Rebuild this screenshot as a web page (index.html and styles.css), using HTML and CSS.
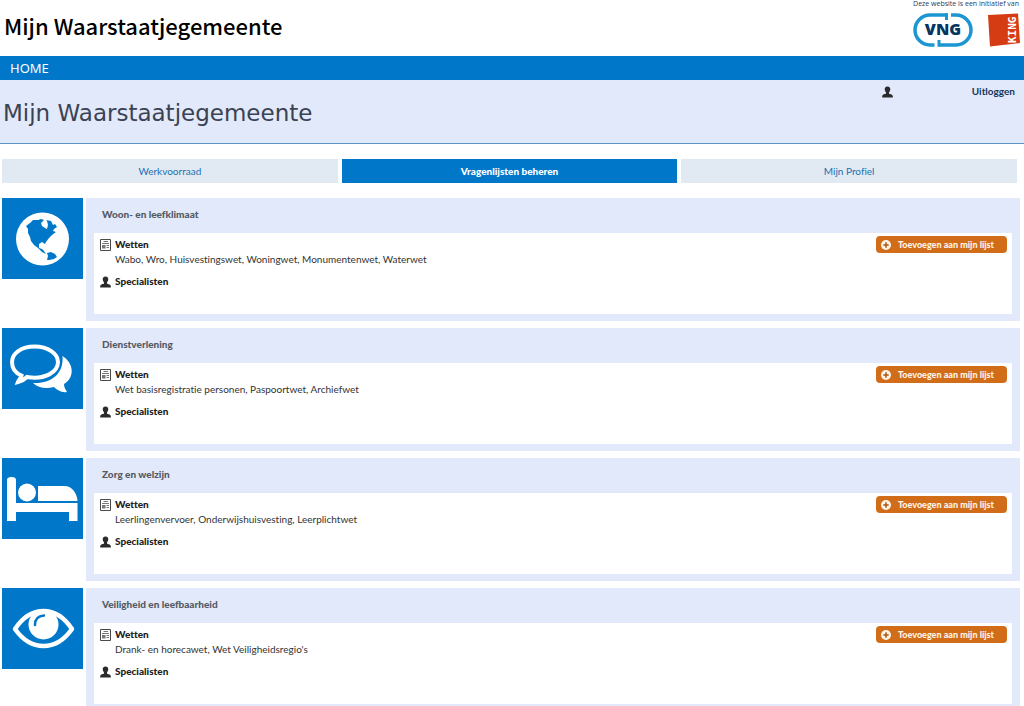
FILE: index.html
```html
<!DOCTYPE html>
<html lang="nl">
<head>
<meta charset="utf-8">
<title>Mijn Waarstaatjegemeente</title>
<meta name="viewport" content="width=device-width, initial-scale=1">
<link rel="stylesheet" href="styles.css">
</head>
<body>
<svg class="sprite" aria-hidden="true">
  <symbol id="person" viewBox="0 0 12 12"><path d="M6 0C3.700 0 2.800 1.500 3 3.300C3.100 4.800 3.900 5.800 4.300 6.400V7.600C4 8.500 .4 8.200 .2 10.500V12H11.800V10.500C11.600 8.200 8 8.500 7.700 7.600V6.400C8.100 5.800 8.900 4.800 9 3.300C9.200 1.500 8.300 0 6 0Z" fill="#2b2b2e"/></symbol>
  <symbol id="law" viewBox="0 0 11 12"><path d="M.5 .5H10.500V11.500H.5Z" fill="#fff" stroke="#4a4a4a"/><path d="M3.500 2.500H8M2 4.500H9M6.500 6.500H9M6.500 8.500H9" stroke="#777"/><path d="M2 6H5.500V9.500H2Z" fill="#777"/></symbol>
  <symbol id="plus" viewBox="0 0 10 10"><circle cx="5" cy="5" r="5" fill="#fff3e6"/><path d="M5 2.300V7.700M2.300 5H7.700" stroke="#a8581a" stroke-width="1.500"/></symbol>
</svg>

<header class="masthead">
  <div class="brand">Mijn Waarstaatjegemeente</div>
  <div class="initiative">
    <p class="initiative-text">Deze website is een initiatief van</p>
    <div class="logos">
      <svg class="vng" viewBox="0 0 60 34" role="img" aria-label="VNG">
        <path d="M35 2H17a15 15 0 0 0 0 30H21.500M26 32H43a15 15 0 0 0 0-30H38" fill="none" stroke="#1c96d2" stroke-width="3.500"/>
        <path d="M33.500 .3V7M26 27V33.700" stroke="#1c96d2" stroke-width="3"/>
        <text class="vng-text" x="30" y="22" text-anchor="middle">VNG</text>
      </svg>
      <svg class="king" viewBox="0 0 34 34" role="img" aria-label="KING">
        <path d="M1 2L31 .5L33 30L3 33.500Z" fill="#d63c14"/>
        <text class="king-text" transform="translate(29 30) rotate(-90)">KING</text>
      </svg>
    </div>
  </div>
</header>

<nav class="mainnav"><a href="#">HOME</a></nav>

<div class="titlebar">
  <h1 class="title">Mijn Waarstaatjegemeente</h1>
  <div class="account">
    <svg class="account-icon"><use href="#person"/></svg>
    <a class="logout" href="#">Uitloggen</a>
  </div>
</div>

<nav class="tabs">
  <a class="tab" href="#">Werkvoorraad</a>
  <a class="tab tab-active" href="#" aria-current="page">Vragenlijsten beheren</a>
  <a class="tab" href="#">Mijn Profiel</a>
</nav>

<main class="topics">
  <section class="topic">
    <svg class="tile" viewBox="0 0 81 81"><circle cx="40.500" cy="41" r="26.500" fill="#fff"/><path d="M24 28L28 25L31 22L36 22L39 21L42 22L39 25L40 28L43 30L45 31L46 27L45 23L44 22L49 23L51 27L53 26L55 29L52 31L51 33L54 34L50 37L47 40L44 44L43 46L40 44L37 46L37 50L40 51L42 53L44 56L40 54L36 50L32 47L29 43L28 39L26 35L26 31Z" fill="#0077c8"/><path d="M45 55L49 54L53 56L55 59L52 61L47 62L45 62L46 58Z" fill="#0077c8"/></svg>
    <div class="panel">
      <h2 class="topic-title">Woon- en leefklimaat</h2>
      <div class="box">
        <dl class="facts">
          <dt><svg class="icon-law"><use href="#law"/></svg>Wetten</dt><dd>Wabo, Wro, Huisvestingswet, Woningwet, Monumentenwet, Waterwet</dd>
          <dt><svg class="icon-person"><use href="#person"/></svg>Specialisten</dt>
        </dl>
        <button class="add" type="button"><svg class="icon-plus"><use href="#plus"/></svg>Toevoegen aan mijn lijst</button>
      </div>
    </div>
  </section>
  <section class="topic">
    <svg class="tile" viewBox="0 0 81 81"><path d="M60.500 28C72 35 73 50 62 56C62 60 64 62 65 64C60 65 55 62 52 59C44 61 36 60 31 55C49 56 62 46 60.500 28Z" fill="#fff"/><path d="M32.500 18.500C19 18.500 10 25.500 10 34C10 40 13 45 19.500 47.500C19 50 17 51.500 16 54C20 53 23 51 25 49C43 52 56 44 56 34C56 25.500 46 18.500 32.500 18.500Z" fill="none" stroke="#fff" stroke-width="4"/></svg>
    <div class="panel">
      <h2 class="topic-title">Dienstverlening</h2>
      <div class="box">
        <dl class="facts">
          <dt><svg class="icon-law"><use href="#law"/></svg>Wetten</dt><dd>Wet basisregistratie personen, Paspoortwet, Archiefwet</dd>
          <dt><svg class="icon-person"><use href="#person"/></svg>Specialisten</dt>
        </dl>
        <button class="add" type="button"><svg class="icon-plus"><use href="#plus"/></svg>Toevoegen aan mijn lijst</button>
      </div>
    </div>
  </section>
  <section class="topic">
    <svg class="tile" viewBox="0 0 81 81"><path d="M5 63V22Q5 19 9.500 19T14 22V45H75.500V63H67V54H14V63Z" fill="#fff"/><path d="M14 44.500H76" stroke="#0077c8"/><circle cx="25" cy="34.500" r="9" fill="#fff"/><path d="M36 28H62C71 28 75 36 75.500 43H36Z" fill="#fff"/></svg>
    <div class="panel">
      <h2 class="topic-title">Zorg en welzijn</h2>
      <div class="box">
        <dl class="facts">
          <dt><svg class="icon-law"><use href="#law"/></svg>Wetten</dt><dd>Leerlingenvervoer, Onderwijshuisvesting, Leerplichtwet</dd>
          <dt><svg class="icon-person"><use href="#person"/></svg>Specialisten</dt>
        </dl>
        <button class="add" type="button"><svg class="icon-plus"><use href="#plus"/></svg>Toevoegen aan mijn lijst</button>
      </div>
    </div>
  </section>
  <section class="topic">
    <svg class="tile" viewBox="0 0 81 81"><path d="M13 41Q25 23 41.500 23T70 41Q58 58 41.500 58T13 41Z" fill="none" stroke="#fff" stroke-width="4.500" stroke-linejoin="round"/><circle cx="41.500" cy="36.500" r="15" fill="#fff"/><path d="M33 37Q33 28 42 27.500" fill="none" stroke="#0077c8" stroke-width="2.500" stroke-linecap="round"/></svg>
    <div class="panel">
      <h2 class="topic-title">Veiligheid en leefbaarheid</h2>
      <div class="box">
        <dl class="facts">
          <dt><svg class="icon-law"><use href="#law"/></svg>Wetten</dt><dd>Drank- en horecawet, Wet Veiligheidsregio's</dd>
          <dt><svg class="icon-person"><use href="#person"/></svg>Specialisten</dt>
        </dl>
        <button class="add" type="button"><svg class="icon-plus"><use href="#plus"/></svg>Toevoegen aan mijn lijst</button>
      </div>
    </div>
  </section>
</main>
</body>
</html>
```
FILE: styles.css
```css
* { box-sizing: border-box; }
html { overflow: hidden; }
body {
  margin: 0;
  background: #fff;
  color: #333;
  font: 10px/15px Lato, "Open Sans", sans-serif;
  font-variant-ligatures: none;
}
h1, h2, p, dl, dd { margin: 0; }
a { color: inherit; text-decoration: none; }
svg { flex: none; }
.sprite { display: none; }

.masthead {
  display: flex;
  justify-content: space-between;
  min-height: 56px;
  padding: 0 3px 0 4px;
}
.brand {
  padding-top: 10px;
  color: #000;
  font: 500 22px/30px "Noto Sans CJK SC", sans-serif;
}
.initiative { display: flex; flex-direction: column; align-items: flex-end; }
.initiative-text {
  padding-right: 2px;
  color: #1d3c63;
  font: 7px/8px "Open Sans", sans-serif;
}
.logos { display: flex; gap: 14px; padding-top: 5px; }
.vng { width: 60px; height: 34px; }
.vng-text { fill: #06365f; font: 800 16px "Open Sans", sans-serif; }
.king { width: 34px; height: 34px; }
.king-text { fill: #fff; font: bold 11px "DejaVu Sans Mono", monospace; }

.mainnav {
  padding: 0 10px;
  background: #0077c8;
  color: #fff;
  font: 13px/24px "Noto Sans", sans-serif;
}

.titlebar {
  display: flex;
  justify-content: space-between;
  min-height: 64px;
  padding: 0 9px 0 3px;
  border-bottom: 1px solid #5b95c5;
  background: #e1e9fa;
}
.title {
  padding-top: 19px;
  color: #3b4252;
  font: 23px/28px "DejaVu Sans", sans-serif;
}
.account { display: flex; align-items: flex-start; gap: 79px; padding-top: 4px; }
.account-icon { width: 11px; height: 12px; margin-top: 2px; }
.logout { color: #14355c; font-weight: bold; }

.tabs {
  display: grid;
  grid-template-columns: repeat(3, 1fr);
  gap: 4px;
  padding: 15px 7px 0 2px;
}
.tab {
  background: #e1eaf2;
  color: #1d70b3;
  line-height: 24px;
  text-align: center;
}
.tab-active { background: #0077c8; color: #fff; font-weight: 900; }

.topics {
  display: flex;
  flex-direction: column;
  gap: 7px;
  padding: 15px 4px 0 2px;
}
.topic { display: flex; align-items: flex-start; gap: 3px; }
.tile { width: 81px; height: 81px; background: #0077c8; }
.panel { flex: 1; padding: 9px 8px 7px; background: #e1e9fa; }
.topic-title {
  padding: 0 8px 11px;
  color: #555a63;
  font-size: 10px;
  font-weight: 900;
  line-height: 15px;
}
.box {
  display: flex;
  justify-content: space-between;
  align-items: flex-start;
  min-height: 81px;
  padding: 3px 5px 0 6px;
  background: #fff;
}
.facts { display: grid; padding-top: 1px; }
.facts dt { display: flex; align-items: center; gap: 4px; color: #222; font-weight: 900; }
.facts dd { padding: 0 0 7px 15px; }
.icon-law, .icon-person { width: 11px; height: 12px; }
.add {
  display: flex;
  align-items: center;
  gap: 7px;
  height: 17px;
  padding: 0 13px 0 5px;
  border: 0;
  border-radius: 4px;
  background: #d16d18;
  color: #fff3e6;
  font: 900 9px/17px Lato, sans-serif;
}
.icon-plus { width: 10px; height: 10px; }
```
